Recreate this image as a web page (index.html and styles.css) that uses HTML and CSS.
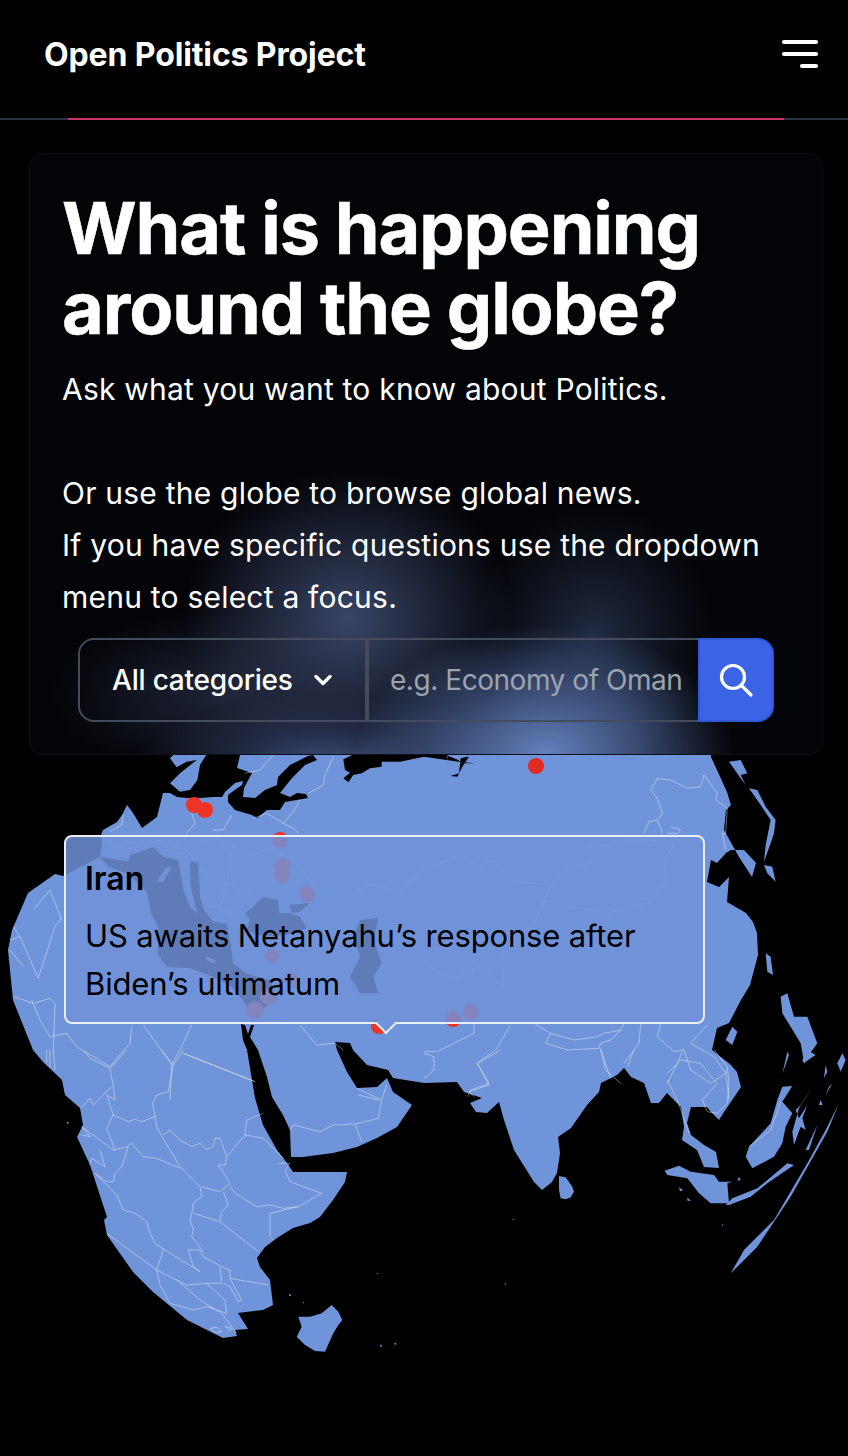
FILE: index.html
```html
<!DOCTYPE html>
<html lang="en">
<head>
<meta charset="utf-8">
<title>Open Politics Project</title>
<link rel="stylesheet" href="styles.css">
</head>
<body>
<div class="page">
  <svg class="map" width="848" height="1456" viewBox="0 0 848 1456" aria-hidden="true">
    <path class="land" d="M55 874L63 876L100 857L102 845L101 835L103 830L117 822L122 815L127 805L133 813L142 828L157 817L163 793L170 793L177 797L187 798L200 798L213 797L222 797L225 792L235 783L243 781L242 785L232 792L228 795L228 802L235 810L252 815L257 818L267 810L280 810L285 802L308 798L306 794L297 793L290 797L280 793L292 778L305 765L317 760L313 755L308 756L290 765L278 777L277 785L265 790L255 798L243 797L244 788L252 773L237 768L240 755L242 745L711 745L711 757L717 770L727 792L731 805L726 810L724 830L739 857L752 877L756 863L744 850L731 850L726 853L717 863L711 860L707 882L719 887L729 877L727 902L746 913L753 922L757 933L758 955L750 985L741 1000L729 1023L717 1028L712 1050L731 1065L737 1072L741 1087L739 1090L724 1112L719 1120L711 1112L707 1107L691 1107L687 1123L691 1135L704 1145L716 1152L719 1168L704 1167L697 1150L682 1140L684 1127L681 1107L672 1098L667 1093L659 1103L651 1103L644 1083L631 1077L624 1068L617 1075L601 1083L599 1092L587 1105L571 1128L558 1137L560 1153L557 1173L552 1182L542 1190L534 1182L514 1150L504 1120L499 1102L487 1113L476 1112L470 1103L482 1098L464 1092L457 1082L424 1083L393 1078L388 1070L367 1065L353 1050L350 1043L335 1042L337 1050L347 1072L357 1088L377 1087L387 1078L393 1092L412 1105L397 1127L377 1138L357 1147L333 1153L303 1157L291 1157L290 1130L283 1115L272 1097L267 1077L258 1050L250 1037L254 1025L251 1025L248 1034L245 1025L241 1024L243 1040L247 1050L255 1098L263 1125L277 1150L287 1163L293 1172L320 1172L347 1172L345 1182L333 1200L320 1217L310 1223L293 1228L277 1238L265 1247L257 1258L260 1267L270 1280L273 1305L263 1310L238 1313L248 1329L235 1330L237 1336L223 1338L187 1320L153 1292L133 1272L107 1235L104 1220L107 1217L90 1165L77 1137L83 1125L80 1108L65 1095L62 1080L43 1062L33 1050L13 1000L8 950L12 930L28 893Z"/>
    <!-- Seas and northern coast, traced at 3x around the top of the map -->
    <g transform="translate(0 750) scale(.33333)">
      <path class="sea" d="M300 320L325 350L385 372L440 425L452 485L478 540L472 610L500 650L570 655L640 680L700 715L735 760L760 800L790 775L830 745L810 690L735 670L700 640L690 570L680 520L640 515L612 480L600 440L595 335L570 335L572 410L592 490L570 470L550 420L535 330L490 320L460 292L390 315L385 335L325 325Z"/>
      <path class="sea" d="M735 490L760 470L790 440L835 450L838 490L870 490L900 500L920 535L860 555L790 560L740 540L750 510Z"/>
      <path class="sea" d="M868 465L930 458L900 485L875 490Z"/>
      <path class="sea" d="M1050 680L1080 620L1060 560L1080 510L1135 505L1120 570L1145 640L1120 680L1135 730L1080 730Z"/>
      <path class="land" d="M497 355L515 350L490 395L470 395Z"/>
      <path class="land" d="M620 620L650 632L640 640L618 630Z"/>
      <path class="land" d="M510 25L530 5L625 5L600 45L592 90L570 120L540 125L510 100L540 70L590 30L560 35L530 52Z"/>
      <path class="sea" d="M1030 28L1035 60L1050 68L1030 85L1045 97L1060 75L1085 70L1110 55L1145 50L1145 35L1200 35L1272 20L1340 30L1345 5L1090 0Z"/>
      <path class="sea" d="M1340 30L1375 35L1425 40L1385 40L1375 30L1345 18Z"/>
    </g>
    <g transform="translate(424 750) scale(.33333)">
      <path class="sea" d="M130 20L110 25L105 70L80 78L100 80L115 50L135 20Z"/>
    </g>
    <!-- Islands -->
    <g class="land" transform="translate(424 750) scale(.33333)">
      <path d="M915 35L950 30L970 70L950 75L965 105L950 85Z"/>
      <path d="M975 115L1000 120L1025 170L1055 210L1050 250L1040 280L1020 335L1025 285L1040 210L1010 165Z"/>
      <path d="M1020 345L1045 350L1055 395L1030 370Z"/>
      <path d="M1025 610L1040 620L1047 675L1030 665Z"/>
      <path d="M1070 740L1090 730L1110 800L1150 800L1180 880L1140 935L1130 880L1100 830L1075 790Z"/>
      <path d="M905 870L925 830L940 845L925 885Z"/>
    </g>
    <g class="land" transform="translate(424 1050) scale(.33333)">
      <path d="M405 378L425 382L445 410L450 425L440 442L425 448L410 445L405 420Z"/>
      <path d="M1075 110L1105 108L1075 155L1105 190L1085 230L1075 280L1050 320L985 355L965 320L975 290L1040 220L1060 150Z"/>
      <path d="M1175 95L1130 165L1115 180L1125 205L1150 165L1135 205L1145 240L1130 230L1110 285L1105 245L1125 175Z"/>
      <path d="M905 465L925 445L1000 415L1090 340L1110 345L1030 400L980 440L915 465Z"/>
      <path d="M722 362L765 347L800 365L870 375L885 395L925 395L910 400L915 460L860 460L825 430L790 385L730 375Z"/>
      <path d="M945 380L950 390L940 392Z"/>
      <path d="M765 412L777 420L768 424Z"/>
      <path d="M790 443L801 452L790 452Z"/>
      <path d="M880 705L920 670L960 600L1050 510L1150 340L1205 240L1245 160L1210 245L1100 440L1000 590L925 665Z"/>
      <path d="M1145 300L1180 225L1155 300Z"/>
      <path d="M1190 150L1196 165L1185 165Z"/>
      <path d="M1225 100L1205 135L1215 110Z"/>
      <path d="M1205 45L1200 85L1210 65Z"/>
      <path d="M1240 40L1255 10L1265 30L1250 65Z"/>
      <path d="M1135 30L1150 0L1175 15L1160 25L1140 40Z"/>
      <path d="M1090 5L1075 72L1095 15Z"/>
      <circle cx="268" cy="508" r="2"/><circle cx="896" cy="525" r="2"/><circle cx="244" cy="702" r="2"/>
    </g>
    <g class="land" transform="translate(0 1050) scale(.33333)">
      <path d="M895 800L930 800L965 790L995 765L1015 785L1027 810L1015 825L1000 850L975 905L945 903L915 885L890 860L905 830Z"/>
      <circle cx="203" cy="218" r="3"/><circle cx="870" cy="735" r="3"/><circle cx="910" cy="758" r="2"/>
      <circle cx="1143" cy="887" r="3"/><circle cx="1186" cy="881" r="3"/><circle cx="1132" cy="670" r="2"/>
    </g>
    <!-- Borders -->
    <g class="borders" transform="translate(0 1050) scale(.33333)">
      <path d="M550 10L765 95M550 0L520 45L505 125L470 135L458 160L470 230L485 258L540 350L600 410L605 440M520 45L485 0"/>
      <path d="M250 0L270 25L330 55L380 0M330 55L340 110L345 150L320 135L340 195L320 235L345 300M340 195L385 215L405 208L425 215L465 200"/>
      <path d="M240 175L270 145L280 165L335 110M160 0L165 60M140 0L140 40M150 0L150 50"/>
      <path d="M245 230L340 300L385 290L365 350L345 370L340 395L320 395L285 370M385 285L395 280L430 320L470 325L540 355M245 230L270 260L245 255M270 345L275 325L315 350L300 300"/>
      <path d="M285 370L350 435L370 480L405 490L440 515L450 550L465 580L495 600L600 665L580 650L565 600L600 600L610 620L665 650L690 660L690 685L805 705"/>
      <path d="M490 600L470 660L530 690L560 705L620 700L665 700L660 650M320 550L470 660L480 705L510 760L580 780L620 770L680 790L675 750L620 700M690 685L725 750L715 755L690 710L670 700M530 690L600 750L665 790L710 850"/>
      <path d="M490 255L510 240L540 270L575 290L600 280L620 298L640 290L645 265L660 265L680 320L735 255L790 265L850 325M680 320L675 345L655 345L690 400L660 425L605 410"/>
      <path d="M690 410L705 430L770 470L810 465L850 475L895 470L965 430L870 395L855 360L870 340L835 340"/>
      <path d="M605 440L580 460L575 490L570 510L580 540L575 560L610 605M580 490L660 515L775 605M660 515L665 485L685 465L670 425M810 490L895 470M810 490L810 560L820 570M735 255L740 210L790 190"/>
      <path d="M870 240L880 225L960 245L1000 225L1065 222L1135 205L1145 150L1070 115M1065 222L1085 275M1145 150L1160 105M1135 150L1075 135"/>
      <path d="M630 835L650 832L665 845L645 848ZM675 828L695 835L690 842Z"/>
    </g>
    <g class="borders" transform="translate(0 750) scale(.33333)">
      <path d="M185 505L165 530L115 685L60 560L40 530M100 480L150 420L185 510M30 570L60 560M30 600L70 650M40 740L100 760L150 745L165 760L160 900M95 750L120 810L150 860L200 850L230 890L330 950L390 880L395 830"/>
      <path d="M430 825L515 945L545 890L575 825M550 910L765 995M515 945L510 1050M900 825L950 885L1005 880M1005 880L1030 900"/>
      <path d="M370 195L365 225L330 245M575 190L585 220L560 250M640 240L670 240L695 195M800 190L850 220L880 185L900 150M850 220L880 235L895 250M800 190L760 205M1000 20L975 75L970 105L925 130M820 15L780 60L735 70"/>
      <path class="faint" d="M300 260L380 300L470 270L560 300L640 260L700 290L760 310L800 300L880 330L950 410L900 450M560 300L620 380L680 400L660 470M700 290L680 400L760 440M620 470L660 470L700 500M1060 440L1100 400L1200 420L1272 360"/>
    </g>
    <g class="borders" transform="translate(424 750) scale(.33333)">
      <path d="M840 75L880 130L875 150L910 175L905 250L895 250L905 300M840 75L830 110L790 115L740 90L700 85L680 120L700 145L715 190L700 210L675 215L660 250M700 210L715 250M740 230L770 240L760 250L730 250"/>
      <path class="faint" d="M0 360L100 320L170 345L210 330L270 395L380 405L420 360L500 340L490 290L550 285L600 270L680 270L750 280L720 340L730 390L670 460L550 490L445 470L360 450L380 405M360 450L330 520L230 620L240 710L160 650L90 690L0 640"/>
      <path d="M0 905L40 905L90 880L150 850L150 820M260 825L215 900L160 940L195 1000L140 1020L130 1040M330 820L380 850L450 870L520 860L540 850L590 840L560 870L530 880L525 895L430 900L365 880L380 850M600 820L590 840M650 820L645 880L630 900L610 950M530 895L545 960L590 1000"/>
      <path d="M710 820L700 860L750 905L780 900L800 960L860 1000L905 970L870 920L800 880L850 825M905 960L915 1050M730 1000L760 940L775 905"/>
    </g>
    <g class="borders" transform="translate(424 1050) scale(.33333)">
      <path d="M0 85L30 60L30 20L0 10M160 40L195 105L135 125L150 140M230 0L160 40M530 0L560 85M600 40L630 0"/>
      <path d="M730 70L770 30L830 40L870 90L880 100L835 150L850 185L880 190L910 160L915 100M730 90L760 150L795 250M870 0L910 50L915 100M975 290L1040 240L1070 155"/>
    </g>
    <!-- Markers -->
    <g class="markers">
      <circle cx="194" cy="805" r="8"/><circle cx="205" cy="810" r="8"/>
      <circle class="marker-deep" cx="536" cy="766" r="8"/>
      <circle cx="280" cy="840" r="8"/><circle cx="282" cy="866" r="8"/><circle cx="282" cy="875" r="8"/>
      <circle cx="307" cy="894" r="8"/><circle cx="272" cy="956" r="7"/><circle cx="292" cy="980" r="7"/>
      <circle cx="268" cy="997" r="8"/><circle cx="255" cy="1010" r="9"/>
      <circle cx="379" cy="1026" r="8"/><circle cx="453" cy="1019" r="8"/><circle cx="471" cy="1012" r="8"/>
    </g>
  </svg>

  <header class="topbar">
    <div class="brand">Open Politics Project</div>
    <button class="menu" type="button" aria-label="Menu">
      <span class="menu-bar"></span><span class="menu-bar"></span><span class="menu-bar menu-bar-short"></span>
    </button>
    <span class="progress"></span>
  </header>

  <main class="hero">
    <h1 class="hero-title">What is happening around the globe?</h1>
    <p class="hero-copy">Ask what you want to know about Politics.</p>
    <p class="hero-copy hero-copy-gap">Or use the globe to browse global news.<br>If you have specific questions use the dropdown menu to select a focus.</p>
    <form class="search">
      <button class="search-select" type="button">All categories
        <svg class="chevron" width="18" height="12" viewBox="0 0 18 12"><path d="M2 2.5L9 9.5L16 2.5"/></svg>
      </button>
      <input class="search-input" type="text" placeholder="e.g. Economy of Oman">
      <button class="search-go" type="button" aria-label="Search">
        <svg class="magnifier" width="36" height="36" viewBox="0 0 36 36"><circle cx="15" cy="15" r="11.5"/><path d="M24 24L33 33"/></svg>
      </button>
    </form>
  </main>

  <aside class="tip">
    <div class="tip-title">Iran</div>
    <div class="tip-body">US awaits Netanyahu’s response after Biden’s ultimatum</div>
    <span class="tip-arrow"></span>
  </aside>
</div>
</body>
</html>
```

FILE: styles.css
```css
* { box-sizing: border-box; }
html, body { margin: 0; background: #000; }
body { font-family: Inter, "Liberation Sans", sans-serif; color: #fff; }

.page { position: relative; width: 848px; height: 1456px; overflow: hidden; background: #000; }

.map { position: absolute; left: 0; top: 0; display: block; }
.land { fill: #7094d9; }
.sea { fill: #000; }
.borders { fill: none; stroke: #fff; stroke-opacity: .5; stroke-width: 2.4; stroke-linejoin: round; }
.faint { stroke-opacity: .4; }
.markers { fill: #ee3327; }
.marker-deep { fill: #e02c20; }

.topbar {
  position: relative;
  height: 120px;
  padding: 0 30px 10px 44px;
  display: flex;
  align-items: center;
  justify-content: space-between;
  background: #000;
  border-bottom: 2px solid #2b3444;
}
.brand { font-size: 32px; font-weight: 700; letter-spacing: -.12px; }
.menu {
  width: 36px;
  padding: 0;
  display: flex;
  flex-direction: column;
  align-items: flex-end;
  gap: 8px;
  background: none;
  border: 0;
}
.menu-bar { display: block; width: 36px; height: 4px; border-radius: 2px; background: #fff; }
.menu-bar-short { width: 18px; }
.progress { position: absolute; left: 68px; width: 716px; bottom: -2px; height: 2px; background: #c9356b; }

.hero {
  position: relative;
  width: 794px;
  height: 602px;
  margin: 33px 0 0 29px;
  padding: 34px 32px 0 32px;
  border: 1px solid #0e1015;
  border-radius: 14px;
  background-color: #030407;
  background-image:
    radial-gradient(ellipse 190px 130px at 515px 601px, rgba(106,136,200,.95), rgba(90,118,178,.6) 50%, rgba(60,80,125,0) 100%),
    radial-gradient(ellipse 120px 130px at 565px 480px, rgba(62,80,122,.5), rgba(50,66,100,.25) 55%, rgba(40,50,80,0) 100%),
    radial-gradient(ellipse 165px 150px at 318px 465px, rgba(60,73,108,.95), rgba(48,58,88,.55) 55%, rgba(30,36,56,0) 100%),
    radial-gradient(ellipse 190px 70px at 300px 610px, rgba(82,106,165,.75), rgba(60,78,125,.35) 55%, rgba(40,50,80,0) 100%),
    radial-gradient(ellipse 170px 85px at 190px 540px, rgba(42,50,76,.7), rgba(30,36,56,0) 100%);
}
.hero-title { margin: 0 0 15px; font-size: 72px; line-height: 80px; font-weight: 700; letter-spacing: -1.1px; -webkit-text-stroke: .5px #fff; }
.hero-copy { margin: 0; font-size: 30px; line-height: 52px; font-weight: 400; letter-spacing: .22px; }
.hero-copy-gap { margin-top: 52px; }

.search { display: flex; width: 696px; height: 84px; margin: 15px 0 0 16px; }
.search-select {
  width: 289px;
  height: 84px;
  padding: 0 32px;
  display: flex;
  align-items: center;
  gap: 21px;
  color: #fff;
  font: 500 28px Inter, sans-serif;
  letter-spacing: -.2px;
  background: transparent;
  border: 2px solid #434b5c;
  border-radius: 16px 0 0 16px;
}
.chevron { fill: none; stroke: #fff; stroke-width: 3.4; stroke-linecap: round; stroke-linejoin: round; }
.search-input {
  flex: 1;
  min-width: 0;
  height: 84px;
  padding: 0 4px 0 21px;
  color: #fff;
  font: 400 28px Inter, sans-serif;
  letter-spacing: -.45px;
  background: transparent;
  border: 2px solid #434b5c;
  border-right: 0;
  border-radius: 0;
  outline: 0;
}
.search-input::placeholder { color: #9ca3af; opacity: 1; }
.search-go {
  width: 76px;
  height: 84px;
  padding: 0;
  display: flex;
  align-items: center;
  justify-content: center;
  background: #3a63e6;
  border: 2px solid #2f58d6;
  border-radius: 0 16px 16px 0;
}
.magnifier { fill: none; stroke: #fff; stroke-width: 3.2; stroke-linecap: round; }

.tip {
  position: absolute;
  left: 64px;
  top: 835px;
  width: 641px;
  height: 189px;
  padding: 20px 19px 0;
  color: #000;
  background: rgba(112,146,216,.85);
  border: 2px solid #e9eef8;
  border-radius: 8px;
}
.tip-title { font-size: 32px; line-height: 44px; font-weight: 600; }
.tip-body { margin-top: 11px; font-size: 31px; line-height: 48px; font-weight: 400; letter-spacing: -.15px; }
.tip-arrow {
  position: absolute;
  left: 312px;
  bottom: -9px;
  width: 16px;
  height: 16px;
  transform: rotate(45deg);
  background: #7094d9;
  border-right: 2px solid #e9eef8;
  border-bottom: 2px solid #e9eef8;
}
```
